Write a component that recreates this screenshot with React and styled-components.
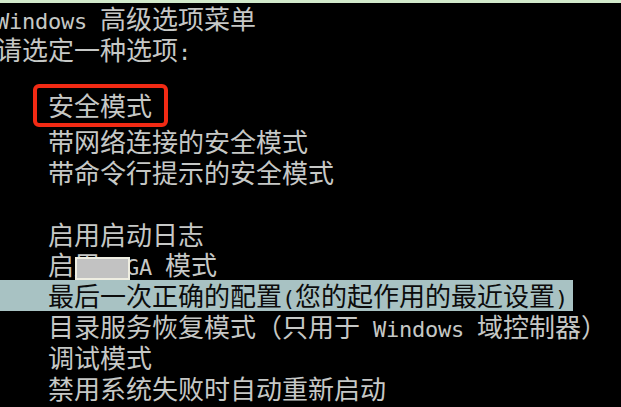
import React from "react";
import styled, { createGlobalStyle } from "styled-components";

const GlobalStyle = createGlobalStyle`
    html, body {
        margin: 0;
        padding: 0;
        background: #000;
        overflow: hidden;
    }
`;

const Screen = styled.div`
    width: 621px;
    height: 407px;
    background: #000;
    overflow: hidden;
    display: flex;
    flex-direction: column;
`;

const TopStrip = styled.div`
    height: 3px;
    flex: none;
    background: #d2eacb;
`;

const Console = styled.div`
    margin-left: -4px;
    display: flex;
    flex-direction: column;
    font-family: "Noto Sans CJK SC", "Noto Sans", sans-serif;
    font-size: 26px;
    color: #c6c8c6;
`;

const Row = styled.div`
    position: relative;
    height: 30.8px;
    line-height: 30.8px;
    white-space: pre;
    padding-left: ${(p) => (p.$indent ? "52px" : "0")};
    margin: ${(p) => (p.$shift ? `${-p.$shift}px 0 ${p.$shift}px` : "0")};
    width: ${(p) => (p.$selected ? "525px" : "auto")};
    background: ${(p) => (p.$selected ? "#a8c2c3" : "transparent")};
    color: ${(p) => (p.$selected ? "#0c0c0c" : "inherit")};
`;

const Blank = styled.div`
    height: 30.8px;
`;

const Ascii = styled.span`
    font-family: "DejaVu Sans Mono", "Liberation Mono", monospace;
    font-size: 22px;
    letter-spacing: -0.24px;
`;

const Boxed = styled.span`
    position: relative;
    display: inline-block;
    line-height: 30.8px;

    &::after {
        content: "";
        position: absolute;
        top: -6px;
        bottom: -6px;
        left: -15px;
        right: -16px;
        border: 4px solid #f22a14;
        border-radius: 6px;
    }
`;

const Redact = styled.span`
    position: absolute;
    left: 79px;
    top: 8px;
    width: 51px;
    height: 19px;
    background: #c2c2c2;
    border: 2px solid #efeee2;
`;

const App = () => {
    return (
        <Screen>
            <GlobalStyle />
            <TopStrip />
            <Console>
                <Row><Ascii>Windows </Ascii>高级选项菜单</Row>
                <Row>请选定一种选项<Ascii>:</Ascii></Row>
                <Blank />
                <Row $indent $shift={5}><Boxed>安全模式</Boxed></Row>
                <Row $indent>带网络连接的安全模式</Row>
                <Row $indent>带命令行提示的安全模式</Row>
                <Blank />
                <Row $indent>启用启动日志</Row>
                <Row $indent>
                    启用<Ascii> VGA </Ascii>模式
                    <Redact />
                </Row>
                <Row $indent $selected>
                    最后一次正确的配置<Ascii>(</Ascii>您的起作用的最近设置<Ascii>)</Ascii>
                </Row>
                <Row $indent>目录服务恢复模式（只用于<Ascii> Windows </Ascii>域控制器）</Row>
                <Row $indent>调试模式</Row>
                <Row $indent>禁用系统失败时自动重新启动</Row>
            </Console>
        </Screen>
    );
};

export default App;
